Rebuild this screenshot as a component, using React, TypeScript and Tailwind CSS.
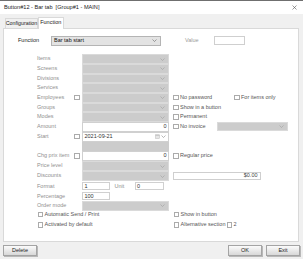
import React from "react";

const Cb = () => (
  <span className="inline-block w-[5.5px] h-[5.5px] border border-[#ababab] bg-white shrink-0 mr-[1.5px]" />
);

const Chev = ({ color = "#a0a0a0" }: { color?: string }) => (
  <svg width="5" height="3" viewBox="0 0 5 3" className="shrink-0">
    <path d="M0.5 0.5 L2.5 2.5 L4.5 0.5" fill="none" stroke={color} strokeWidth="0.6" />
  </svg>
);

const GreySel = ({ w = "w-[87px]" }: { w?: string }) => (
  <div className={`${w} h-full bg-[#cccccc] border border-[#dadada] flex items-center justify-end pr-[3px]`}>
    <Chev />
  </div>
);

const WhiteIn = ({ children, w = "w-[87px]", h = "h-full", right = true }: { children?: React.ReactNode; w?: string; h?: string; right?: boolean }) => (
  <div className={`${w} ${h} bg-white border border-[#d0d0d0] flex items-center ${right ? "justify-end pr-[1.5px]" : "pl-[1.5px]"} text-[#333]`}>
    {children}
  </div>
);

const Row = ({
  label,
  cb,
  field,
  right,
  h = "h-[9.67px]",
}: {
  label?: string;
  cb?: boolean;
  field?: React.ReactNode;
  right?: React.ReactNode;
  h?: string;
}) => (
  <div className={`flex items-center ${h}`}>
    <div className="w-[37px] text-[#909090] whitespace-nowrap">{label}</div>
    <div className="w-[8px] flex items-center">{cb ? <Cb /> : null}</div>
    <div className="w-[87px] h-full flex items-center">{field}</div>
    <div className="ml-[4px] flex items-center h-full">{right}</div>
  </div>
);

const CbLabel = ({ text, className = "" }: { text: string; className?: string }) => (
  <div className={`flex items-center text-[#555] whitespace-nowrap ${className}`}>
    <Cb />
    <span>{text}</span>
  </div>
);

const Btn = ({ text }: { text: string }) => (
  <div className="w-[34px] h-[11px] border border-[#a4a4a4] bg-gradient-to-b from-[#fbfbfb] to-[#d8d8d8] flex items-center justify-center text-[#222] shadow-[1px_1px_0_#b8b8b8]">
    {text}
  </div>
);

export default function App() {
  return (
    <div className="w-[303px] h-[259px] bg-[#f0f0f0] overflow-hidden font-['Liberation_Sans',Arial,sans-serif] text-[5.5px] leading-none border-t border-[#6f6f6f]">
      {/* title bar */}
      <div className="h-[13px] bg-white flex items-center justify-between pl-[4px] pr-[6px] text-[#222] text-[5.6px]">
        <span className="whitespace-pre">Button#12 - Bar tab  [Group#1 - MAIN]</span>
        <svg width="5" height="5" viewBox="0 0 5 5">
          <path d="M0.5 0.5 L4.5 4.5 M4.5 0.5 L0.5 4.5" stroke="#555" strokeWidth="0.6" />
        </svg>
      </div>
      {/* tabs */}
      <div className="h-[13.7px] flex items-end pl-[5px]">
        <div className="w-[33px] h-[9.7px] border border-[#d9d9d9] border-b-0 bg-[#f0f0f0] flex items-center justify-center text-[#222] text-[5.3px]">
          Configuration
        </div>
        <div className="relative z-10 -mb-px w-[25.5px] h-[12px] border border-[#d9d9d9] border-b-0 bg-white flex items-center justify-center text-[#222]">
          Function
        </div>
      </div>
      {/* panel */}
      <div className="mx-[3px] w-[296px] h-[214px] bg-white border border-[#d9d9d9] pt-[7.3px]">
        <div className="flex items-center h-[10px] pl-[14px]">
          <div className="w-[33px] text-[#222]">Function</div>
          <div className="w-[110px] h-[10px] bg-[#e3e3e3] border border-[#b4b4b4] flex items-center justify-between pl-[2px] pr-[3px] text-[#111]">
            <span>Bar tab start</span>
            <Chev color="#666" />
          </div>
          <div className="ml-[24px] w-[29px] text-[#9a9a9a]">Value</div>
          <div className="w-[31px] h-[9px] bg-white border border-[#cfcfcf]" />
        </div>

        <div className="mt-[8.3px] pl-[33px]">
          <Row label="Items" field={<GreySel />} />
          <Row label="Screens" field={<GreySel />} />
          <Row label="Divisions" field={<GreySel />} />
          <Row label="Services" field={<GreySel />} />
          <Row
            label="Employees"
            cb
            field={<GreySel />}
            right={
              <>
                <CbLabel text="No password" className="w-[61px]" />
                <CbLabel text="For items only" />
              </>
            }
          />
          <Row label="Groups" field={<GreySel />} right={<CbLabel text="Show in a button" />} />
          <Row label="Modes" field={<GreySel />} right={<CbLabel text="Permanent" />} />
          <Row
            label="Amount"
            field={<WhiteIn>0</WhiteIn>}
            right={
              <>
                <CbLabel text="No invoice" className="w-[44px]" />
                <div className="w-[71px] h-[9px] bg-[#cccccc] border border-[#dadada] flex items-center justify-end pr-[3px]">
                  <Chev />
                </div>
              </>
            }
          />
          <Row
            label="Start"
            cb
            h="h-[10px]"
            field={
              <div className="w-[87px] h-full bg-white border border-[#d0d0d0] flex items-center justify-between pl-[1.5px] pr-[2px] text-[#333]">
                <span>2021-09-21</span>
                <span className="flex items-center gap-[1.5px]">
                  <svg width="5" height="5" viewBox="0 0 5 5">
                    <rect x="0.5" y="0.8" width="4" height="3.8" fill="#e6e6e6" stroke="#b9b9b9" strokeWidth="0.5" />
                    <rect x="0.5" y="0.8" width="4" height="1" fill="#c4c4c4" />
                  </svg>
                  <Chev color="#8a8a8a" />
                </span>
              </div>
            }
          />
          <Row h="h-[9.5px]" field={<div className="w-[87px] h-[8.5px] bg-[#cccccc]" />} />
          <Row
            label="Chg prix item"
            cb
            h="h-[10px]"
            field={<WhiteIn>0</WhiteIn>}
            right={<CbLabel text="Regular price" />}
          />
          <Row label="Price level" h="h-[10px]" field={<GreySel />} />
          <Row
            label="Discounts"
            h="h-[10px]"
            field={<GreySel />}
            right={
              <div className="w-[87.5px] h-[8.5px] bg-white border border-[#cfcfcf] flex items-center justify-end pr-[2px] text-[#444]">
                $0.00
              </div>
            }
          />
          <Row
            label="Format"
            h="h-[10.5px]"
            field={
              <div className="flex items-center h-full">
                <WhiteIn w="w-[27.5px]" h="h-[8px]" right={false}>1</WhiteIn>
                <span className="ml-[5px] w-[20px] text-[#909090]">Unit</span>
                <WhiteIn w="w-[29px]" h="h-[8px]" right={false}>0</WhiteIn>
              </div>
            }
          />
          <Row
            label="Percentage"
            h="h-[9.5px]"
            field={<WhiteIn w="w-[27.5px]" h="h-[8.3px]" right={false}>100</WhiteIn>}
          />
          <Row label="Order mode" h="h-[9.7px]" field={<GreySel />} />

          <div className="mt-[0.5px] flex items-center h-[7px]">
            <CbLabel text="Automatic Send / Print" className="w-[136px] ml-[0.5px]" />
            <CbLabel text="Show in button" />
          </div>
          <div className="mt-[3.5px] flex items-center h-[7px]">
            <CbLabel text="Activated by default" className="w-[136px] ml-[0.5px]" />
            <CbLabel text="Alternative section" className="w-[53px]" />
            <CbLabel text="2" />
          </div>
        </div>
      </div>
      {/* buttons */}
      <div className="flex items-center mt-[3.5px] pl-[3px] pr-[3px]">
        <Btn text="Delete" />
        <div className="flex-1" />
        <Btn text="OK" />
        <div className="w-[4px]" />
        <Btn text="Exit" />
      </div>
    </div>
  );
}
